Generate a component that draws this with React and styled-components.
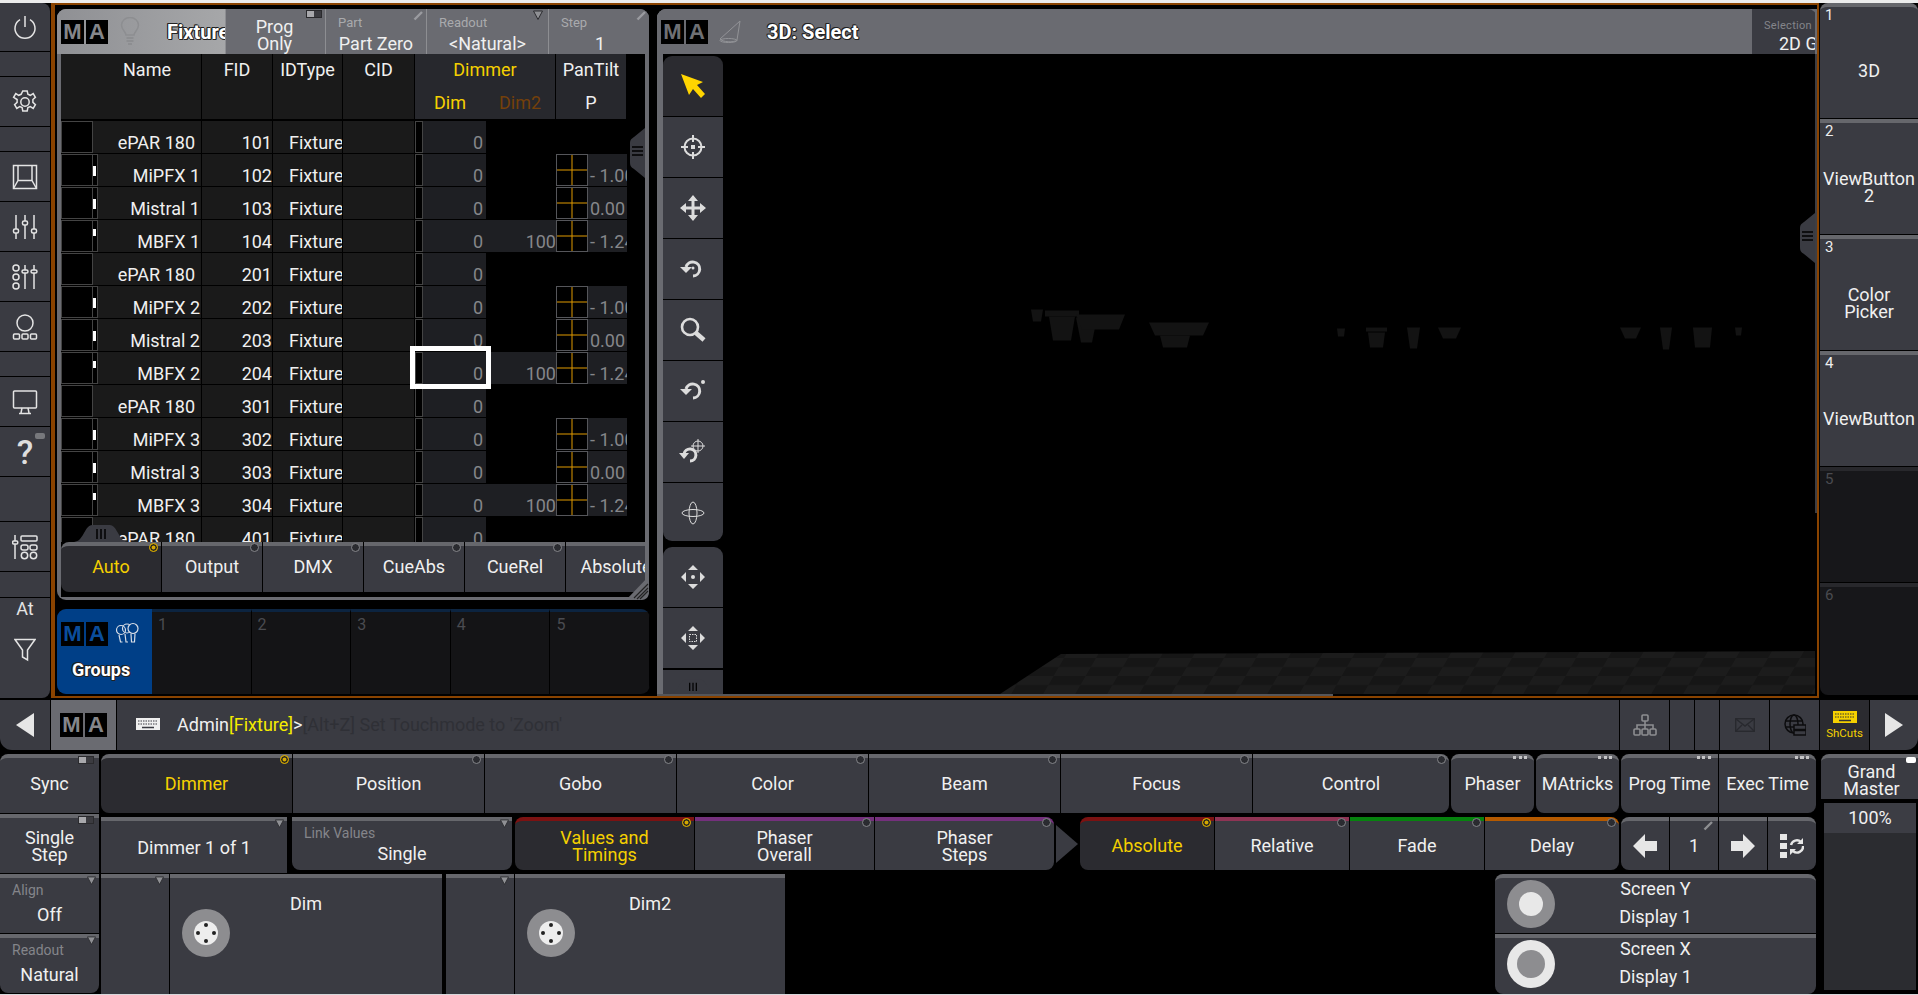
import React from 'react';
import styled, { createGlobalStyle } from 'styled-components';

const GlobalStyle = createGlobalStyle`
  html, body { margin: 0; padding: 0; background: #000; overflow: hidden; }
  * { box-sizing: border-box; }
  body { font-family: Roboto, "Liberation Sans", sans-serif; color: #f0f0f0; }
`;

const BTN = '#3a3b42';
const BTN_ON = '#2b2b30';
const STRIP = '#66676c';
const YELLOW = '#f5d000';

const Page = styled.div`
  width: 1918px;
  height: 995px;
  background: #000;
  display: flex;
  flex-direction: column;
  border-top: 3px solid #ececec;
  border-bottom: 1px solid #d8d8dc;
  overflow: hidden;
`;

const TopArea = styled.div`
  display: flex;
  height: 696px;
  flex: none;
`;

/* left icon rail */
const Rail = styled.div`
  width: 50px;
  flex: none;
  display: flex;
  flex-direction: column;
  gap: 1px;
  margin-right: 1px;
`;

const RailCell = styled.div`
  position: relative;
  height: ${p => p.$h}px;
  flex: none;
  background: ${BTN};
  display: flex;
  flex-direction: column;
  align-items: center;
  justify-content: ${p => (p.$top ? 'flex-start' : 'center')};
  color: #e4e4e4;
  font-size: 18px;
  border-radius: ${p => (p.$first ? '0 8px 0 0' : p.$last ? '0 0 8px 0' : '0')};
`;

const HelpMark = styled.span`
  font-size: 34px;
  font-weight: 500;
  line-height: 34px;
  color: #dedede;
`;

const RailBadge = styled.span`
  position: absolute;
  top: 6px;
  right: 5px;
  width: 10px;
  height: 6px;
  border-radius: 2px;
  background: #77787c;
`;

const AtText = styled.span`
  line-height: 22px;
  margin: 0 0 18px;
`;

/* orange framed workspace */
const Workspace = styled.div`
  width: 1768px;
  flex: none;
  height: 695px;
  border: solid #8a4300;
  border-width: 2px 2px 2px 4px;
  padding: 4px 0 0 2px;
  display: flex;
  gap: 8px;
`;

const LeftColumn = styled.div`
  width: 592px;
  flex: none;
  display: flex;
  flex-direction: column;
  gap: 9px;
`;

const Window = styled.div`
  position: relative;
  height: 591px;
  flex: none;
  background: #6a6b71;
  border-radius: 9px;
  display: flex;
  flex-direction: column;
  padding-bottom: 3px;
`;

const TitleBar = styled.div`
  height: 45px;
  flex: none;
  display: flex;
  background: #6a6b71;
  border-radius: 9px 9px 0 0;
  overflow: hidden;
`;

const TitleMain = styled.div`
  width: ${p => p.$w};
  flex: ${p => (p.$w === 'auto' ? '1' : 'none')};
  background: ${p => p.$bg};
  display: flex;
  align-items: center;
  padding-left: ${p => p.$pad}px;
  overflow: hidden;
`;

const TitleText = styled.span`
  font-size: ${p => p.$size || 20}px;
  font-weight: 700;
  white-space: nowrap;
  margin-left: ${p => p.$ml}px;
  color: #fff;
  text-shadow: -1px 0 #222, 1px 0 #222, 0 -1px #222, 0 1px #222, 1px 1px #222, -1px -1px #222;
`;

const LogoWrap = styled.div`
  display: flex;
  gap: 2px;
  flex: none;
`;

const LogoBox = styled.span`
  width: ${p => p.$w}px;
  height: ${p => p.$h}px;
  background: #000;
  color: ${p => p.$color};
  display: flex;
  align-items: center;
  justify-content: center;
  font-family: "Liberation Sans", sans-serif;
  font-size: 22px;
  font-weight: 700;
`;

const IconSlot = styled.span`
  display: flex;
  flex: none;
  margin-left: ${p => p.$ml}px;
`;

const TitleSlot = styled.div`
  position: relative;
  width: ${p => p.$w}px;
  flex: none;
  border-left: 1px solid #8d8e92;
  display: flex;
  flex-direction: column;
  align-items: center;
  overflow: hidden;
  white-space: nowrap;
`;

const SlotLabel = styled.span`
  align-self: flex-start;
  padding-left: ${p => p.$pl}px;
  font-size: 13px;
  line-height: 15px;
  margin-top: 6px;
  color: #a9aaad;
`;

const SlotValue = styled.span`
  font-size: 18px;
  line-height: 21px;
  margin-top: 3px;
  padding-left: ${p => p.$pl || 0}px;
`;

const TwoLines = styled.span`
  font-size: 18px;
  line-height: 17px;
  text-align: center;
  margin: 9px 2px 0 0;
`;

const SlotMark = styled.span`
  position: absolute;
  top: ${p => p.$t ?? 1}px;
  right: ${p => p.$r ?? 2}px;
  display: flex;
`;

const ToggleMark = styled.span`
  width: ${p => p.$w || 16}px;
  height: 8px;
  border: 1px solid #2a2a2d;
  background: linear-gradient(90deg, #a8a8ac 50%, #3b3b40 50%);
`;

/* fixture table */
const TableArea = styled.div`
  position: relative;
  flex: 1;
  margin: 0 4px;
  background: #000;
  overflow: hidden;
`;

const Grid = styled.div`
  display: grid;
  width: 566px;
  grid-template-columns: 141px 71px 70px 72px 141px 71px;
`;

const HeadCell = styled.div`
  height: 65px;
  background: ${p => (p.$feature ? '#27282d' : '#1a1a1a')};
  border-right: 1px solid #000;
  color: ${p => p.$color || '#f0f0f0'};
  font-size: 18px;
  padding-left: ${p => p.$pl || 0}px;
  padding-top: 5px;
  text-align: center;
  line-height: 21px;
`;

const SubHead = styled.div`
  display: flex;
  margin: 12px 0 0;
`;

const SubHeadItem = styled.span`
  flex: 1;
  color: ${p => p.$color};
  text-align: center;
`;

const Rows = styled.div`
  display: flex;
  flex-direction: column;
  gap: 1px;
  margin-top: 2px;
`;

const Row = styled(Grid)`
  position: relative;
  height: 32px;
  flex: none;
`;

const BaseCell = styled.div`
  background: #1a1a1a;
  border-right: 1px solid #000;
  display: flex;
  align-items: flex-end;
  font-size: 18px;
  line-height: 20px;
  white-space: nowrap;
  overflow: hidden;
`;

const NameCell = styled(BaseCell)`
  justify-content: flex-end;
  padding-right: ${p => (p.$plain ? 6 : 1)}px;
  align-items: stretch;
`;

const NameText = styled.span`
  margin-left: auto;
  align-self: flex-end;
  line-height: 21px;
`;

const Swatch = styled.span`
  width: 32px;
  flex: none;
  background: #000;
  border: 1px solid #444;
`;

const LevelBar = styled.span`
  position: relative;
  width: 5px;
  flex: none;
  background: #000;
  border: 1px solid #444;
  border-left: 0;
`;

const LevelTick = styled.span`
  position: absolute;
  left: 0;
  right: 1px;
  top: ${p => p.$top}px;
  height: ${p => p.$h}px;
  background: #fff;
`;

const NumCell = styled(BaseCell)`
  justify-content: flex-end;
`;

const TypeCell = styled(BaseCell)`
  padding-left: 16px;
`;

const DimCell = styled.div`
  display: flex;
  position: relative;
  border-right: 1px solid #000;
`;

const DimBar = styled.span`
  width: 8px;
  flex: none;
  background: #000;
  border: 1px solid #444;
`;

const DimValues = styled.div`
  width: ${p => (p.$wide ? 133 : 63)}px;
  flex: none;
  background: #1e1f23;
  color: #85868a;
  font-size: 18px;
  line-height: 21px;
  display: flex;
  align-items: flex-end;
`;

const DimValue = styled.span`
  flex: none;
  width: ${p => p.$w}px;
  text-align: right;
`;

const PanCell = styled.div`
  display: flex;
  overflow: hidden;
  background: ${p => (p.$on ? '#1e1f23' : 'transparent')};
`;

const PanBox = styled.span`
  width: 32px;
  flex: none;
  background: #000;
  border: 1px solid #55565a;
  display: flex;
`;

const PanValue = styled.span`
  padding-left: 2px;
  color: #85868a;
  font-size: 18px;
  line-height: 21px;
  align-self: flex-end;
  white-space: nowrap;
`;

const CursorBox = styled.span`
  position: absolute;
  left: -5px;
  top: -6px;
  width: 81px;
  height: 43px;
  border: 5px solid #fff;
  z-index: 2;
`;

const EdgeHandle = styled.span`
  position: absolute;
  display: flex;
  right: ${p => p.$r}px;
  top: ${p => p.$t}px;
  z-index: 3;
`;

const BottomHandle = styled.span`
  position: absolute;
  display: flex;
  left: ${p => p.$l}px;
  bottom: 0;
  z-index: 3;
`;

const ResizeCorner = styled.span`
  position: absolute;
  right: 0;
  bottom: 0;
  display: flex;
  z-index: 3;
`;

const TabRow = styled.div`
  margin: 0 4px;
  height: 55px;
  flex: none;
  background: #000;
  display: flex;
  gap: 1px;
  overflow: hidden;
`;

/* generic key */
const Key = styled.div`
  position: relative;
  background: ${p => (p.$on ? BTN_ON : BTN)};
  border-top: 4px solid ${p => p.$strip || STRIP};
  border-radius: ${p => p.$radius || '0'};
  color: ${p => (p.$on ? YELLOW : '#f0f0f0')};
  font-size: ${p => p.$size || 18}px;
  line-height: 17px;
  text-align: center;
  display: flex;
  flex-direction: column;
  align-items: center;
  justify-content: center;
  white-space: nowrap;
  flex: ${p => (p.$w ? 'none' : '1')};
  width: ${p => (p.$w ? `${p.$w}px` : 'auto')};
  height: ${p => (p.$h ? `${p.$h}px` : 'auto')};
  padding-bottom: ${p => p.$lift || 0}px;
`;

const TabKey = styled(Key)`
  width: 100px;
  height: 50px;
  flex: none;
`;

const Ring = styled.span`
  position: absolute;
  top: -3px;
  right: ${p => p.$r ?? 3}px;
  width: 9px;
  height: 9px;
  border-radius: 50%;
  border: 1.5px solid ${p => (p.$on ? '#d4a800' : '#85868a')};
  background: ${p => (p.$on ? '#d4a800' : '#2a2b30')};
  box-shadow: ${p => (p.$on ? 'inset 0 0 0 1.5px #222' : 'none')};
`;

const Dots = styled.span`
  position: absolute;
  top: -2px;
  right: ${p => p.$r ?? 7}px;
  width: 14px;
  height: 3px;
  background: repeating-linear-gradient(90deg, #c4c4c6 0 3px, transparent 3px 5.5px);
`;

const CornerMark = styled.span`
  position: absolute;
  top: ${p => p.$t ?? -2}px;
  right: ${p => p.$r ?? 3}px;
  display: flex;
`;

const KeyLabel = styled.span`
  align-self: flex-start;
  padding-left: 12px;
  font-size: 14px;
  line-height: 16px;
  color: #84858a;
`;

const KeyValue = styled.span`
  margin-top: ${p => p.$mt || 6}px;
  line-height: 21px;
`;

/* groups pool */
const Pool = styled.div`
  height: 85px;
  flex: none;
  display: flex;
  border-radius: 9px;
  overflow: hidden;
  margin-right: -1px;
  background: #141416;
`;

const PoolTitle = styled.div`
  width: 95px;
  flex: none;
  background: #003f87;
  display: flex;
  flex-direction: column;
  padding: 13px 0 0 4px;
`;

const PoolHead = styled.div`
  display: flex;
  align-items: center;
  gap: 7px;
`;

const PoolName = styled(TitleText)`
  font-size: 18px;
  margin: 13px 0 0 11px;
`;

const PoolCell = styled.div`
  flex: 1;
  border-top: 3px solid #0c2440;
  border-right: 1px solid #000;
  color: #4a4b50;
  font-size: 16px;
  line-height: 20px;
  padding: 3px 0 0 6px;
`;

/* 3D window */
const ViewWindow = styled.div`
  position: relative;
  flex: 1;
  height: 687px;
  background: #6a6b71;
  border-radius: 9px 0 0 0;
  display: flex;
  flex-direction: column;
`;

const ViewBody = styled.div`
  flex: 1;
  min-height: 0;
  display: flex;
  background: #000;
  margin-left: 6px;
  position: relative;
`;

const ToolColumn = styled.div`
  width: 60px;
  flex: none;
  display: flex;
  flex-direction: column;
  padding-top: 2px;
  gap: 6px;
`;

const ToolGroup = styled.div`
  display: flex;
  flex-direction: column;
  gap: 1px;
  border-radius: ${p => p.$radius};
  overflow: hidden;
`;

const ToolKey = styled.div`
  height: ${p => p.$h || 60}px;
  flex: none;
  background: ${p => (p.$on ? BTN_ON : BTN)};
  display: flex;
  align-items: center;
  justify-content: center;
`;

const ToolHandleSlot = styled.div`
  position: relative;
  height: 25px;
  background: ${BTN};
  margin-top: -5px;
  border-top: 1px solid #000;
`;

const Viewport = styled.div`
  flex: 1;
  min-width: 0;
  display: flex;
`;

const SideScroll = styled.div`
  width: 2px;
  flex: none;
  background: linear-gradient(#3d3e43 0 459px, #000 459px);
`;

const BottomScroll = styled.div`
  height: 2px;
  flex: none;
  background: linear-gradient(90deg, #55565a 0 676px, #000 676px);
`;

const SelectionBlock = styled.div`
  width: 63px;
  flex: none;
  margin-right: 2px;
  background: ${BTN};
  overflow: hidden;
  white-space: nowrap;
  padding-left: 12px;
`;

const SelectionLabel = styled.div`
  font-size: 11px;
  line-height: 13px;
  margin-top: 10px;
  color: #84858a;
  letter-spacing: 0.3px;
`;

const SelectionValue = styled.div`
  font-size: 18px;
  line-height: 20px;
  margin: 2px 0 0 15px;
`;

/* right view buttons */
const ViewColumn = styled.div`
  width: 98px;
  flex: none;
  margin-left: 1px;
  display: flex;
  flex-direction: column;
  gap: 1px;
`;

const ViewKey = styled.div`
  position: relative;
  height: ${p => p.$h || 115}px;
  flex: none;
  background: ${p => (p.$off ? '#17171a' : BTN)};
  border-top: 4px solid ${p => (p.$off ? '#28282c' : STRIP)};
  border-radius: ${p => (p.$first ? '8px 8px 0 0' : p.$last ? '0 0 0 8px' : '0')};
  display: flex;
  align-items: center;
  justify-content: center;
  padding-top: 16px;
  text-align: center;
  font-size: 18px;
  line-height: 17px;
`;

const ViewNum = styled.span`
  position: absolute;
  top: -2px;
  left: 5px;
  font-size: 15px;
  line-height: 20px;
  color: ${p => (p.$off ? '#4a4b50' : '#ededed')};
`;

/* command line */
const CommandBar = styled.div`
  margin-top: 1px;
  height: 50px;
  flex: none;
  background: ${BTN};
  border-radius: 0 0 12px 12px;
  display: flex;
  overflow: hidden;
`;

const CmdCell = styled.div`
  width: ${p => p.$w}px;
  flex: none;
  border-left: ${p => (p.$noLine ? '0' : '1px solid #000')};
  background: ${p => p.$bg || 'transparent'};
  display: flex;
  flex-direction: column;
  align-items: center;
  justify-content: center;
`;

const CmdInput = styled.div`
  flex: 1;
  border-left: 1px solid #000;
  display: flex;
  align-items: center;
  padding: 0 0 2px 19px;
  font-size: 18px;
`;

const CmdPrompt = styled.span`
  margin-left: 17px;
`;

const CmdContext = styled.span`
  color: #f5ec00;
`;

const CmdHint = styled.span`
  color: #2f3036;
`;

const ShortcutLabel = styled.span`
  color: ${YELLOW};
  font-size: 11.5px;
  line-height: 14px;
  margin-top: 3px;
`;

/* bottom key area */
const BottomArea = styled.div`
  margin-top: 4px;
  flex: 1;
  display: flex;
  min-height: 0;
`;

const SideKeys = styled.div`
  width: 99px;
  flex: none;
  display: flex;
  flex-direction: column;
  gap: 1px;
`;

const MidKeys = styled.div`
  width: 1715px;
  flex: none;
  margin: 0 5px 0 2px;
  display: flex;
  flex-direction: column;
`;

const KeyRow = styled.div`
  display: flex;
  gap: ${p => p.$gap ?? 2}px;
  height: ${p => p.$h}px;
  margin-top: ${p => p.$mt || 0}px;
  align-items: flex-start;
  flex: none;
`;

const KeyGroup = styled.div`
  display: grid;
  grid-template-columns: ${p => p.$cols || `repeat(${p.$n}, 1fr)`};
  gap: 1px;
  width: ${p => p.$w}px;
  height: ${p => p.$h}px;
  flex: none;
`;

const GroupArrow = styled.span`
  flex: none;
  width: 22px;
  display: flex;
  align-items: center;
  height: 53px;
`;

const EncoderKey = styled(Key)`
  justify-content: flex-start;
  align-items: stretch;
  height: 120px;
`;

const EncoderLabel = styled.span`
  text-align: center;
  margin-top: 18px;
  line-height: 16px;
`;

const EncoderDial = styled.span`
  display: flex;
  margin: -3px 0 0 12px;
`;

const ScreenColumn = styled.div`
  margin-left: auto;
  width: 321px;
  flex: none;
  display: flex;
  flex-direction: column;
  gap: 1px;
`;

const ScreenKey = styled(Key)`
  flex-direction: row;
  height: ${p => p.$h}px;
  flex: none;
  padding: 0 72px 0 12px;
  justify-content: flex-start;
`;

const ScreenText = styled.div`
  flex: 1;
  margin-left: 12px;
  line-height: 28px;
  margin-top: -6px;
`;

const ScreenDial = styled.span`
  display: flex;
  flex: none;
  margin-top: -4px;
`;

const MasterColumn = styled.div`
  width: 97px;
  flex: none;
  display: flex;
  flex-direction: column;
`;

const MasterKey = styled(Key)`
  height: 45px;
  flex: none;
  padding: 2px 0 0 4px;
`;

const MasterFader = styled.div`
  margin: 3px 1px 0 2px;
  flex: 1;
  margin-bottom: 3px;
  background: #2b2c30;
  border: 1px solid #000;
  display: flex;
  flex-direction: column;
`;

const MasterValue = styled.div`
  height: 30px;
  background: #3c3d44;
  font-size: 18px;
  line-height: 30px;
  text-align: center;
`;

const WhiteMark = styled.span`
  position: absolute;
  top: -1px;
  right: 2px;
  width: 10px;
  height: 6px;
  background: #fff;
  border-radius: 2px;
`;

/* drawings */
const Logo = ({ color = '#8d8d90' }) => (
  <LogoWrap>
    <LogoBox $w={23} $h={24} $color={color}>M</LogoBox>
    <LogoBox $w={22} $h={24} $color={color}>A</LogoBox>
  </LogoWrap>
);

const Stroke = ({ w = 26, h = 26, vb = '0 0 26 26', color = '#e4e4e4', sw = 1.5, children }) => (
  <svg width={w} height={h} viewBox={vb} fill="none" stroke={color} strokeWidth={sw}>
    {children}
  </svg>
);

const PowerIcon = () => (
  <Stroke>
    <path d="M8 5.6a10 10 0 1 0 10 0" />
    <path d="M13 2v11" />
  </Stroke>
);

const GearIcon = () => (
  <Stroke>
    <path d="M10.8 2h4.4l.7 3.3 2.4 1 2.9-1.8 2.2 3.8-2.5 2.2v2.9l2.5 2.2-2.2 3.8-2.9-1.8-2.4 1-.7 3.4h-4.4l-.7-3.4-2.4-1-2.9 1.8-2.2-3.8 2.5-2.2v-2.9L1.6 8.3l2.2-3.8 2.9 1.8 2.4-1z" />
    <circle cx="13" cy="13" r="4.2" />
  </Stroke>
);

const StageIcon = () => (
  <Stroke>
    <rect x="1.5" y="1.5" width="23" height="23" />
    <path d="M6 1.5v15M20 1.5v15M6 16.5h14M6 16.5l-4.5 8M20 16.5l4.5 8" />
  </Stroke>
);

const SlidersIcon = () => (
  <Stroke>
    <path d="M4 1v24M13 1v24M22 1v24" />
    <rect x="1.5" y="15" width="5" height="4" rx="1.5" fill={BTN} />
    <rect x="10.5" y="7" width="5" height="4" rx="1.5" fill={BTN} />
    <rect x="19.5" y="15" width="5" height="4" rx="1.5" fill={BTN} />
  </Stroke>
);

const ColorSlidersIcon = () => (
  <Stroke>
    <circle cx="4" cy="4" r="3" />
    <circle cx="4" cy="13" r="3" />
    <circle cx="4" cy="22" r="3" />
    <path d="M13 1v24M22 1v24" />
    <rect x="10" y="6" width="6" height="3" rx="1.5" fill={BTN} />
    <rect x="19" y="6" width="6" height="3" rx="1.5" fill={BTN} />
  </Stroke>
);

const ConeIcon = () => (
  <Stroke>
    <circle cx="13" cy="9" r="8" />
    <rect x="1.5" y="20" width="6" height="5" rx="1" />
    <rect x="10" y="20" width="6" height="5" rx="1" />
    <rect x="18.5" y="20" width="6" height="5" rx="1" />
  </Stroke>
);

const MonitorIcon = () => (
  <Stroke>
    <path d="M2.5 2h21a1 1 0 0 1 1 1v15a1 1 0 0 1-1 1h-21a1 1 0 0 1-1-1V3a1 1 0 0 1 1-1z" />
    <path d="M10 19l-1 5M16 19l1 5M7 24.5h12" />
  </Stroke>
);

const GridIcon = () => (
  <Stroke>
    <path d="M3 1v24" />
    <rect x="0.7" y="7" width="5" height="3" rx="1" fill={BTN} />
    <rect x="9" y="2" width="16" height="5" rx="1" />
    <rect x="9" y="11" width="7" height="5" rx="2" />
    <rect x="18" y="11" width="7" height="5" rx="2" />
    <circle cx="12.5" cy="21.5" r="3.2" />
    <circle cx="21.5" cy="21.5" r="3.2" />
  </Stroke>
);

const FilterIcon = () => (
  <Stroke w={22} h={24} vb="0 0 22 24">
    <path d="M1 1.5h20L13.5 12v10l-5-3V12z" />
  </Stroke>
);

const BulbIcon = () => (
  <Stroke w={20} h={30} vb="0 0 20 30" color="#8d8e91">
    <path d="M6 18c0-3-4.5-5-4.5-10a8.5 7.5 0 0 1 17 0c0 5-4.5 7-4.5 10z" />
    <path d="M6.5 21h7M6.5 24h7M8 27h4" strokeWidth="2" />
  </Stroke>
);

const BulbsIcon = () => (
  <Stroke w={24} h={24} vb="0 0 24 24" color="#d7dde6" sw={1.2}>
    <circle cx="6" cy="8" r="4.5" />
    <circle cx="12" cy="6.5" r="4.5" />
    <circle cx="18" cy="6.5" r="5" fill="#003f87" />
    <path d="M4 13l1.5 7h2M10 12l1 8h2M16 12l.5 8h3l.5-8" />
  </Stroke>
);

const ConeTitleIcon = () => (
  <Stroke w={22} h={24} vb="0 0 22 24" color="#929397" sw={1}>
    <path d="M21 1L1 19c2 3 14 4 17 1z" />
    <ellipse cx="9.5" cy="20.5" rx="8.5" ry="2" />
  </Stroke>
);

const Triangle = ({ size = 9, fill = '#8f9094' }) => (
  <svg width={size} height={size} viewBox="0 0 10 10">
    <path d="M0.5 1h9L5 9.5z" fill={fill} stroke="#2c2c30" strokeWidth="1" />
  </svg>
);

const Pencil = ({ color = '#9a9ba0' }) => (
  <svg width={11} height={11} viewBox="0 0 11 11">
    <path d="M1.5 9.5L9 2" stroke={color} strokeWidth="2.4" />
  </svg>
);

const PanCross = () => (
  <svg width="30" height="30" viewBox="0 0 30 30">
    <path d="M15 0v30M0 15h30" stroke="#e09a00" strokeWidth="1" />
  </svg>
);

const SideHandle = () => (
  <svg width="15" height="50" viewBox="0 0 15 50">
    <path d="M15 0v50L4 41c-3-2-4-3-4-7V16c0-4 1-5 4-7z" fill="#3a3b42" />
    <path d="M2 19h11M2 23h11M2 27h11" stroke="#000" strokeWidth="1.5" />
  </svg>
);

const TabHandle = ({ w = 58, h = 17 }) => (
  <svg width={w} height={h} viewBox="0 0 58 17">
    <path d="M0 17c6 0 8-2 12-9s5-8 10-8h14c5 0 6 1 10 8s6 9 12 9z" fill="#3a3b42" />
    <path d="M25 4v10M29 4v10M33 4v10" stroke="#000" strokeWidth="1.5" />
  </svg>
);

const CornerGrip = () => (
  <svg width="23" height="24" viewBox="0 0 23 24">
    <path d="M23 0v16c0 5-3 8-8 8H0z" fill="#6a6b71" />
    <path d="M8 22L22 8M11 23L22 12M14 23l8-8" stroke="#222" strokeWidth="1.2" />
  </svg>
);

const ToolIcon = ({ children }) => (
  <svg width="28" height="28" viewBox="0 0 28 28" fill="none" stroke="#dcdcdc" strokeWidth="2">
    {children}
  </svg>
);

const rotatePath = 'M7 12a7 7 0 1 1 7 9';
const tools = [
  {
    on: true,
    icon: (
      <svg width="28" height="28" viewBox="0 0 28 28">
        <path d="M2 2l22 8-6 3 8 9-4 4-8-9-4 6z" fill="#ffd500" />
      </svg>
    ),
  },
  {
    icon: (
      <ToolIcon>
        <circle cx="14" cy="14" r="8.5" />
        <path d="M14 2v7M14 19v7M2 14h7M19 14h7" />
        <rect x="12" y="12" width="4" height="4" fill="#dcdcdc" stroke="none" />
      </ToolIcon>
    ),
  },
  {
    icon: (
      <ToolIcon>
        <path d="M14 5v18M5 14h18" strokeWidth="3" />
        <path d="M14 1l5 6H9zM14 27l5-6H9zM1 14l6-5v10zM27 14l-6-5v10z" fill="#dcdcdc" stroke="none" />
      </ToolIcon>
    ),
  },
  {
    icon: (
      <ToolIcon>
        <path d={rotatePath} strokeWidth="3" />
        <path d="M1 12h12l-6 6z" fill="#dcdcdc" stroke="none" />
        <circle cx="14" cy="13" r="1.5" fill="#dcdcdc" stroke="none" />
      </ToolIcon>
    ),
  },
  {
    icon: (
      <ToolIcon>
        <circle cx="11" cy="11" r="8" strokeWidth="2.6" />
        <path d="M17 17l8 7" strokeWidth="4.5" />
      </ToolIcon>
    ),
  },
  {
    icon: (
      <ToolIcon>
        <path d={rotatePath} strokeWidth="3" />
        <path d="M1 12h12l-6 6z" fill="#dcdcdc" stroke="none" />
        <circle cx="24" cy="5" r="2" fill="#dcdcdc" stroke="none" />
      </ToolIcon>
    ),
  },
  {
    icon: (
      <ToolIcon>
        <path d="M5 16a6 6 0 1 1 6 7" strokeWidth="3" />
        <path d="M0 15h10l-5 6z" fill="#dcdcdc" stroke="none" />
        <circle cx="19" cy="8" r="5" strokeWidth="1" fill={BTN} />
        <path d="M19 1v14M12 8h14" strokeWidth="1" />
      </ToolIcon>
    ),
  },
  {
    icon: (
      <ToolIcon>
        <ellipse cx="14" cy="14" rx="11" ry="3.5" strokeWidth="1" />
        <ellipse cx="14" cy="14" rx="4" ry="11" strokeWidth="1" />
      </ToolIcon>
    ),
  },
];

const Arrows4 = ({ children }) => (
  <ToolIcon>
    <path d="M14 2l5 5H9zM14 26l5-5H9zM2 14l5-5v10zM26 14l-5-5v10z" fill="#dcdcdc" stroke="none" />
    {children}
  </ToolIcon>
);

// x, y, width, height, taper of the fixture bodies in the 3D view
const scenePieces = [
  [1031, 310, 12, 12, 2], [1045, 311, 34, 6, 0], [1049, 317, 26, 24, 4], [1076, 318, 21, 25, 5], [1076, 315, 49, 15, 6],
  [1149, 323, 60, 13, 6], [1160, 336, 30, 12, 3], [1337, 329, 8, 8, 1], [1366, 328, 21, 4, 0], [1368, 333, 17, 15, 2],
  [1407, 328, 13, 21, 3], [1438, 328, 23, 11, 5], [1620, 328, 21, 11, 5], [1660, 328, 12, 22, 3], [1693, 328, 19, 20, 2],
  [1735, 328, 7, 8, 1],
];

const Scene = () => (
  <svg width="100%" height="100%" viewBox="723 54 1092 641" preserveAspectRatio="none">
    <defs>
      <pattern id="floor" width="64" height="18" patternUnits="userSpaceOnUse" patternTransform="translate(1000 659) skewX(-30)">
        <rect width="64" height="18" fill="#1c1c1c" />
        <rect width="32" height="9" fill="#161616" />
        <rect x="32" y="9" width="32" height="9" fill="#161616" />
      </pattern>
    </defs>
    {scenePieces.map(([x, y, w, h, t]) => (
      <path key={`${x}-${y}`} d={`M${x} ${y}h${w}l${-t} ${h}h${-(w - 2 * t)}z`} fill="#131313" />
    ))}
    <path d="M1061 655L1815 652V695H1000z" fill="url(#floor)" />
  </svg>
);

const Dial = () => (
  <svg width="48" height="48" viewBox="0 0 48 48">
    <circle cx="24" cy="24" r="24" fill="#8d8d90" />
    <circle cx="24" cy="24" r="12" fill="#ededed" />
    <circle cx="24" cy="16" r="2" fill="#222" />
    <circle cx="24" cy="32" r="2" fill="#222" />
    <circle cx="16" cy="24" r="2" fill="#222" />
    <circle cx="32" cy="24" r="2" fill="#222" />
  </svg>
);

const Knob = ({ outer, inner, r }) => (
  <svg width="48" height="48" viewBox="0 0 48 48">
    <circle cx="24" cy="24" r="24" fill={outer} />
    <circle cx="24" cy="24" r={r} fill={inner} />
  </svg>
);

const KeyboardIcon = ({ body = '#efefef', keys = '#3a3b42' }) => (
  <svg width="24" height="12" viewBox="0 0 24 12">
    <rect width="24" height="12" fill={body} />
    <path d="M2 3h20M2 6h20" stroke={keys} strokeWidth="1.2" strokeDasharray="1.5 1" />
    <path d="M6 9.5h12" stroke={keys} strokeWidth="1.4" />
  </svg>
);

const NetworkIcon = () => (
  <Stroke w={24} h={22} vb="0 0 24 22" color="#8d8e91" sw={1.6}>
    <rect x="9" y="1" width="6" height="6" rx="1" />
    <rect x="1" y="15" width="6" height="6" rx="1" />
    <rect x="9" y="15" width="6" height="6" rx="1" />
    <rect x="17" y="15" width="6" height="6" rx="1" />
    <path d="M12 7v8M4 15v-4h16v4" />
  </Stroke>
);

const MailIcon = () => (
  <Stroke w={20} h={14} vb="0 0 20 14" color="#28292e" sw={1.4}>
    <rect x="0.7" y="0.7" width="18.6" height="12.6" />
    <path d="M1 1l9 7 9-7M1 13l6-6M19 13l-6-6" />
  </Stroke>
);

const GlobeServerIcon = () => (
  <Stroke w={22} h={22} vb="0 0 22 22" color="#0c0c0e" sw={1.5}>
    <circle cx="10" cy="10" r="9" />
    <ellipse cx="10" cy="10" rx="4" ry="9" />
    <path d="M1 7h18M1 13h18" />
    <rect x="10" y="11" width="12" height="4.5" fill="#3a3b42" />
    <rect x="10" y="16.5" width="12" height="4.5" fill="#3a3b42" />
  </Stroke>
);

const ArrowLeft = () => (
  <svg width="24" height="24" viewBox="0 0 24 24">
    <path d="M0 12L12 0v7h12v10H12v7z" fill="#e6e6e6" />
  </svg>
);

const ArrowRight = () => (
  <svg width="24" height="24" viewBox="0 0 24 24">
    <path d="M24 12L12 0v7H0v10h12v7z" fill="#e6e6e6" />
  </svg>
);

const CycleIcon = () => (
  <svg width="24" height="24" viewBox="0 0 24 24" fill="none">
    <rect x="0" y="0" width="7" height="6" fill="#e6e6e6" />
    <rect x="0" y="9" width="7" height="6" fill="#e6e6e6" />
    <rect x="0" y="18" width="7" height="6" fill="#e6e6e6" />
    <path d="M11 11a6 6 0 0 1 10-3M23 12a6 6 0 0 1-10 5" stroke="#e6e6e6" strokeWidth="2.4" />
    <path d="M23 4v6h-6zM10 21v-6h6z" fill="#e6e6e6" />
  </svg>
);

const fixtures = [
  { name: 'ePAR 180', fid: 101, plain: true },
  { name: 'MiPFX 1', fid: 102, tick: [11, 10], pan: '- 1.00' },
  { name: 'Mistral 1', fid: 103, tick: [11, 10], pan: '0.00' },
  { name: 'MBFX 1', fid: 104, tick: [8, 7], dim2: 100, pan: '- 1.24' },
  { name: 'ePAR 180', fid: 201, plain: true },
  { name: 'MiPFX 2', fid: 202, tick: [11, 10], pan: '- 1.00' },
  { name: 'Mistral 2', fid: 203, tick: [11, 10], pan: '0.00' },
  { name: 'MBFX 2', fid: 204, tick: [8, 7], dim2: 100, pan: '- 1.24', cursor: true },
  { name: 'ePAR 180', fid: 301, plain: true },
  { name: 'MiPFX 3', fid: 302, tick: [11, 10], pan: '- 1.00' },
  { name: 'Mistral 3', fid: 303, tick: [11, 10], pan: '0.00' },
  { name: 'MBFX 3', fid: 304, tick: [8, 7], dim2: 100, pan: '- 1.24' },
  { name: 'ePAR 180', fid: 401, plain: true },
];

const FixtureRow = ({ f }) => (
  <Row>
    <NameCell $plain={f.plain}>
      <Swatch />
      {f.tick && (
        <LevelBar>
          <LevelTick $top={f.tick[0]} $h={f.tick[1]} />
        </LevelBar>
      )}
      <NameText>{f.name}</NameText>
    </NameCell>
    <NumCell>{f.fid}</NumCell>
    <TypeCell>Fixture</TypeCell>
    <BaseCell />
    <DimCell>
      <DimBar />
      <DimValues $wide={!!f.dim2}>
        <DimValue $w={60}>0</DimValue>
        {f.dim2 && <DimValue $w={73}>{f.dim2}</DimValue>}
      </DimValues>
      {f.cursor && <CursorBox />}
    </DimCell>
    <PanCell $on={!!f.pan}>
      {f.pan && (
        <>
          <PanBox><PanCross /></PanBox>
          <PanValue>{f.pan}</PanValue>
        </>
      )}
    </PanCell>
  </Row>
);

const FixtureWindow = () => (
  <Window>
    <TitleBar>
      <TitleMain $w="168px" $bg="linear-gradient(90deg, #8f9094, #a6a7a9)" $pad={4}>
        <Logo color="#85868a" />
        <IconSlot $ml={12}><BulbIcon /></IconSlot>
        <TitleText $ml={27}>Fixture</TitleText>
      </TitleMain>
      <TitleSlot $w={100}>
        <TwoLines>Prog<br />Only</TwoLines>
        <SlotMark $t={1} $r={3}><ToggleMark /></SlotMark>
      </TitleSlot>
      <TitleSlot $w={101}>
        <SlotLabel $pl={12}>Part</SlotLabel>
        <SlotValue>Part Zero</SlotValue>
        <SlotMark><Pencil /></SlotMark>
      </TitleSlot>
      <TitleSlot $w={122}>
        <SlotLabel $pl={12}>Readout</SlotLabel>
        <SlotValue>&lt;Natural&gt;</SlotValue>
        <SlotMark $r={5}><Triangle size={10} /></SlotMark>
      </TitleSlot>
      <TitleSlot $w={101}>
        <SlotLabel $pl={12}>Step</SlotLabel>
        <SlotValue $pl={2}>1</SlotValue>
        <SlotMark><Pencil /></SlotMark>
      </TitleSlot>
    </TitleBar>
    <TableArea>
      <Grid>
        <HeadCell $pl={32}>Name</HeadCell>
        <HeadCell>FID</HeadCell>
        <HeadCell>IDType</HeadCell>
        <HeadCell>CID</HeadCell>
        <HeadCell $feature $color={YELLOW}>
          Dimmer
          <SubHead>
            <SubHeadItem $color={YELLOW}>Dim</SubHeadItem>
            <SubHeadItem $color="#74400a">Dim2</SubHeadItem>
          </SubHead>
        </HeadCell>
        <HeadCell $feature>
          PanTilt
          <SubHead>
            <SubHeadItem>P</SubHeadItem>
          </SubHead>
        </HeadCell>
      </Grid>
      <Rows>
        {fixtures.map(f => <FixtureRow key={f.fid} f={f} />)}
      </Rows>
      <EdgeHandle $r={0} $t={74}><SideHandle /></EdgeHandle>
      <BottomHandle $l={11}><TabHandle /></BottomHandle>
    </TableArea>
    <TabRow>
      {['Auto', 'Output', 'DMX', 'CueAbs', 'CueRel', 'Absolute'].map((t, i) => (
        <TabKey key={t} $lift={5} $on={i === 0} $radius={i === 0 ? '8px 0 0 8px' : '0'}>
          {t}
          {i < 5 && <Ring $on={i === 0} />}
        </TabKey>
      ))}
    </TabRow>
    <ResizeCorner><CornerGrip /></ResizeCorner>
  </Window>
);

const GroupsPool = () => (
  <Pool>
    <PoolTitle>
      <PoolHead>
        <Logo color="#0a4d9c" />
        <BulbsIcon />
      </PoolHead>
      <PoolName>Groups</PoolName>
    </PoolTitle>
    {[1, 2, 3, 4, 5].map(n => <PoolCell key={n}>{n}</PoolCell>)}
  </Pool>
);

const ViewerWindow = () => (
  <ViewWindow>
    <TitleBar>
      <TitleMain $w="auto" $bg="#6a6b71" $pad={4}>
        <Logo color="#6f7074" />
        <IconSlot $ml={11}><ConeTitleIcon /></IconSlot>
        <TitleText $ml={26}>3D: Select</TitleText>
      </TitleMain>
      <SelectionBlock>
        <SelectionLabel>Selection</SelectionLabel>
        <SelectionValue>2D G</SelectionValue>
      </SelectionBlock>
    </TitleBar>
    <ViewBody>
      <ToolColumn>
        <ToolGroup $radius="9px">
          {tools.map((t, i) => <ToolKey key={i} $on={t.on}>{t.icon}</ToolKey>)}
        </ToolGroup>
        <ToolGroup $radius="9px 9px 0 0">
          <ToolKey>
            <Arrows4><circle cx="14" cy="14" r="2" fill="#dcdcdc" stroke="none" /></Arrows4>
          </ToolKey>
          <ToolKey>
            <Arrows4><rect x="10.5" y="10.5" width="7" height="7" strokeWidth="1" strokeDasharray="1.5 1" /></Arrows4>
          </ToolKey>
        </ToolGroup>
        <ToolHandleSlot>
          <BottomHandle $l={6}><TabHandle w={48} h={15} /></BottomHandle>
        </ToolHandleSlot>
      </ToolColumn>
      <Viewport><Scene /></Viewport>
      <SideScroll />
      <EdgeHandle $r={2} $t={159}><SideHandle /></EdgeHandle>
    </ViewBody>
    <BottomScroll />
  </ViewWindow>
);

const viewKeys = [
  { n: 1, label: '3D', first: true },
  { n: 2, label: <>ViewButton<br />2</> },
  { n: 3, label: <>Color<br />Picker</> },
  { n: 4, label: 'ViewButton' },
  { n: 5, off: true },
  { n: 6, off: true, last: true },
];

const featureKeys = ['Dimmer', 'Position', 'Gobo', 'Color', 'Beam', 'Focus', 'Control'];

export default function App() {
  return (
    <Page>
      <GlobalStyle />
      <TopArea>
        <Rail>
          <RailCell $h={48} $first><PowerIcon /></RailCell>
          <RailCell $h={24} />
          <RailCell $h={49}><GearIcon /></RailCell>
          <RailCell $h={24} />
          <RailCell $h={49}><StageIcon /></RailCell>
          <RailCell $h={49}><SlidersIcon /></RailCell>
          <RailCell $h={49}><ColorSlidersIcon /></RailCell>
          <RailCell $h={49}><ConeIcon /></RailCell>
          <RailCell $h={24} />
          <RailCell $h={49}><MonitorIcon /></RailCell>
          <RailCell $h={49}>
            <HelpMark>?</HelpMark>
            <RailBadge />
          </RailCell>
          <RailCell $h={44} />
          <RailCell $h={49}><GridIcon /></RailCell>
          <RailCell $h={25} />
          <RailCell $h={100} $last $top>
            <AtText>At</AtText>
            <FilterIcon />
          </RailCell>
        </Rail>
        <Workspace>
          <LeftColumn>
            <FixtureWindow />
            <GroupsPool />
          </LeftColumn>
          <ViewerWindow />
        </Workspace>
        <ViewColumn>
          {viewKeys.map(k => (
            <ViewKey key={k.n} $off={k.off} $first={k.first} $last={k.last} $h={k.last ? 112 : 115}>
              <ViewNum $off={k.off}>{k.n}</ViewNum>
              {k.label}
            </ViewKey>
          ))}
        </ViewColumn>
      </TopArea>

      <CommandBar>
        <CmdCell $w={50} $noLine>
          <svg width="18" height="24" viewBox="0 0 18 24"><path d="M18 0v24L0 12z" fill="#e6e6e6" /></svg>
        </CmdCell>
        <CmdCell $w={66} $bg="#6a6b71"><Logo color="#85868a" /></CmdCell>
        <CmdInput>
          <KeyboardIcon />
          <CmdPrompt>
            Admin<CmdContext>[Fixture]</CmdContext>&gt;
            <CmdHint>[Alt+Z] Set Touchmode to 'Zoom'</CmdHint>
          </CmdPrompt>
        </CmdInput>
        <CmdCell $w={50}><NetworkIcon /></CmdCell>
        <CmdCell $w={25} />
        <CmdCell $w={25} />
        <CmdCell $w={50}><MailIcon /></CmdCell>
        <CmdCell $w={50}><GlobeServerIcon /></CmdCell>
        <CmdCell $w={50} $bg={BTN_ON}>
          <KeyboardIcon body={YELLOW} keys="#333" />
          <ShortcutLabel>ShCuts</ShortcutLabel>
        </CmdCell>
        <CmdCell $w={49}>
          <svg width="18" height="24" viewBox="0 0 18 24"><path d="M0 0v24l18-12z" fill="#e6e6e6" /></svg>
        </CmdCell>
      </CommandBar>

      <BottomArea>
        <SideKeys>
          <Key $h={59} $w={99} $radius="8px 0 0 0" $lift={5}>
            Sync
            <SlotMark $t={-2} $r={5}><ToggleMark /></SlotMark>
          </Key>
          <Key $h={59} $w={99}>
            Single<br />Step
            <SlotMark $t={-2} $r={5}><ToggleMark /></SlotMark>
          </Key>
          <Key $h={59} $w={99} $lift={4}>
            <KeyLabel>Align</KeyLabel>
            <KeyValue>Off</KeyValue>
            <CornerMark><Triangle /></CornerMark>
          </Key>
          <Key $h={59} $w={99} $radius="0 0 8px 8px" $lift={4}>
            <KeyLabel>Readout</KeyLabel>
            <KeyValue>Natural</KeyValue>
            <CornerMark><Triangle /></CornerMark>
          </Key>
        </SideKeys>

        <MidKeys>
          <KeyRow $h={59}>
            <KeyGroup $cols="repeat(6, 191px) 1fr" $w={1348} $h={59}>
              {featureKeys.map((k, i) => (
                <Key key={k} $lift={5} $on={i === 0} $radius={i === 0 ? '8px 0 0 8px' : i === 6 ? '0 8px 8px 0' : '0'}>
                  {k}
                  <Ring $on={i === 0} />
                </Key>
              ))}
            </KeyGroup>
            <Key $w={83} $h={59} $lift={5} $radius="8px">Phaser<Dots /></Key>
            <Key $w={83} $h={59} $lift={5} $radius="8px">MAtricks<Dots /></Key>
            <KeyGroup $n={2} $w={195} $h={59}>
              <Key $lift={5} $radius="8px 0 0 8px">Prog Time<Dots /></Key>
              <Key $lift={5} $radius="0 8px 8px 0">Exec Time<Dots /></Key>
            </KeyGroup>
          </KeyRow>

          <KeyRow $h={56} $mt={4}>
            <Key $w={186} $h={56}>
              Dimmer 1 of 1
              <CornerMark><Triangle /></CornerMark>
            </Key>
            <Key $w={220} $h={53} $lift={3} $radius="0 0 8px 8px" style={{ marginLeft: 3 }}>
              <KeyLabel>Link Values</KeyLabel>
              <KeyValue $mt={2}>Single</KeyValue>
              <CornerMark><Triangle /></CornerMark>
            </Key>
            <KeyGroup $n={3} $w={539} $h={53} style={{ marginLeft: 1 }}>
              <Key $on $strip="#7c1212" $radius="8px 0 0 8px">Values and<br />Timings<Ring $on /></Key>
              <Key $strip="#74307c">Phaser<br />Overall<Ring /></Key>
              <Key $strip="#74307c" $radius="0 8px 8px 0">Phaser<br />Steps<Ring /></Key>
            </KeyGroup>
            <GroupArrow>
              <svg width="22" height="38" viewBox="0 0 22 38"><path d="M0 0l22 19L0 38z" fill={BTN} /></svg>
            </GroupArrow>
            <KeyGroup $n={4} $w={539} $h={53}>
              <Key $on $strip="#7c1212" $radius="8px 0 0 8px">Absolute<Ring $on /></Key>
              <Key $strip="#8e3454">Relative<Ring /></Key>
              <Key $strip="#06820e">Fade<Ring /></Key>
              <Key $strip="#b55a00" $radius="0 8px 8px 0">Delay<Ring /></Key>
            </KeyGroup>
            <KeyGroup $n={4} $w={195} $h={53}>
              <Key $radius="8px 0 0 8px"><ArrowLeft /></Key>
              <Key>1<CornerMark $t={-1} $r={4}><Pencil color="#8d8e91" /></CornerMark></Key>
              <Key><ArrowRight /></Key>
              <Key $radius="0 8px 8px 0"><CycleIcon /></Key>
            </KeyGroup>
          </KeyRow>

          <KeyRow $h={120} $mt={1} $gap={1}>
            <Key $w={68} $h={120}><CornerMark $r={5}><Triangle /></CornerMark></Key>
            <EncoderKey $w={272}>
              <EncoderLabel>Dim</EncoderLabel>
              <EncoderDial><Dial /></EncoderDial>
            </EncoderKey>
            <Key $w={68} $h={120} style={{ marginLeft: 3 }}><CornerMark $r={5}><Triangle /></CornerMark></Key>
            <EncoderKey $w={270}>
              <EncoderLabel>Dim2</EncoderLabel>
              <EncoderDial><Dial /></EncoderDial>
            </EncoderKey>
            <ScreenColumn>
              <ScreenKey $h={59} $radius="8px 8px 0 0">
                <ScreenDial><Knob outer="#8d8d90" inner="#e8e8e8" r={12} /></ScreenDial>
                <ScreenText>Screen Y<br />Display 1</ScreenText>
              </ScreenKey>
              <ScreenKey $h={60} $radius="0 0 8px 8px">
                <ScreenDial><Knob outer="#e8e8e8" inner="#8d8d90" r={14} /></ScreenDial>
                <ScreenText>Screen X<br />Display 1</ScreenText>
              </ScreenKey>
            </ScreenColumn>
          </KeyRow>
        </MidKeys>

        <MasterColumn>
          <MasterKey $radius="8px 0 0 0">
            Grand<br />Master
            <WhiteMark />
          </MasterKey>
          <MasterFader>
            <MasterValue>100%</MasterValue>
          </MasterFader>
        </MasterColumn>
      </BottomArea>
    </Page>
  );
}
